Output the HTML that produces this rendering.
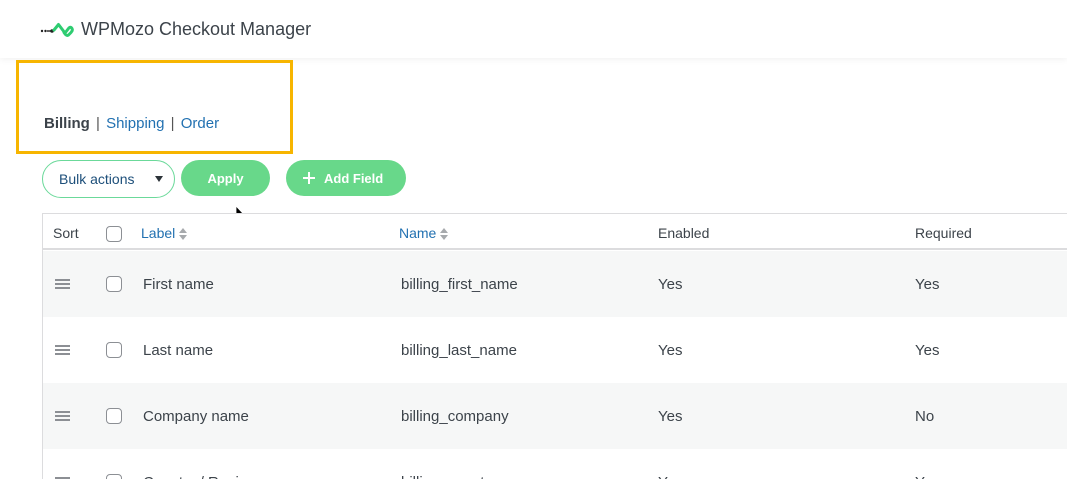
<!DOCTYPE html>
<html><head><style>
*{margin:0;padding:0;box-sizing:border-box}
html,body{width:1067px;height:479px;overflow:hidden}
body{background:#fff;font-family:"Liberation Sans",sans-serif;color:#3c434a;position:relative}
.a{position:absolute;white-space:nowrap}
.hdr{position:absolute;left:0;top:0;width:1067px;height:58px;background:#fff;box-shadow:0 2px 6px rgba(0,0,0,0.05)}
.tbl{position:absolute;left:42px;top:213px;width:1030px;height:270px;border-left:1px solid #dcdcde;border-top:1px solid #dcdcde}
.row{position:absolute;left:0;width:1030px;height:66px}
.cb{position:absolute;width:16px;height:16px;border:1.5px solid #8c8f94;border-radius:4px;background:#fff}
.t{position:absolute;font-size:15px;color:#3c434a}
.h{font-size:14px}
.blue{color:#2271b1}
.ham{position:absolute;left:12px;width:15px;height:10px;border-top:2px solid #8c8f94;border-bottom:2px solid #8c8f94}
.ham:after{content:"";position:absolute;left:0;top:2px;width:15px;height:2px;background:#8c8f94}
.sa{display:inline-block;vertical-align:middle;margin-left:3px}
</style></head><body>
<div class="hdr"></div>
<svg class="a" style="left:40px;top:20px" width="34" height="18" viewBox="0 0 34 18">
<circle cx="2" cy="11" r="1.2" fill="#222"/><circle cx="5.5" cy="11" r="1.2" fill="#222"/><line x1="7" y1="11" x2="12" y2="11" stroke="#222" stroke-width="1.4"/><circle cx="12" cy="11" r="1.8" fill="#222"/>
<path d="M14 10 L18.5 4.5 L25 13 L28.5 8.5 Q30.5 6 32 8.5 Q33 10.5 31 12.5 L28.5 15 Q27 16 25.5 14.5 L24 12.5" fill="none" stroke="#2ecc71" stroke-width="3" stroke-linejoin="round" stroke-linecap="round"/>
</svg>
<div class="a" style="left:81px;top:19px;font-size:18px;color:#3c434a">WPMozo Checkout Manager</div>
<div class="a" style="left:16px;top:60px;width:277px;height:94px;border:3px solid #f7b500"></div>
<div class="a" style="left:44px;top:115px;font-size:15px"><b style="color:#3c434a">Billing</b> <span style="color:#555;padding:0 2px">|</span> <span class="blue">Shipping</span> <span style="color:#555;padding:0 2px">|</span> <span class="blue">Order</span></div>
<div class="a" style="left:42px;top:160px;width:133px;height:38px;border:1px solid #6bd99a;border-radius:19px;background:#fff"></div>
<div class="a" style="left:59px;top:171px;font-size:14px;color:#1d4f7a">Bulk actions</div>
<div class="a" style="left:155px;top:176px;width:0;height:0;border-left:4.5px solid transparent;border-right:4.5px solid transparent;border-top:6px solid #2c3338"></div>
<div class="a" style="left:181px;top:160px;width:89px;height:36px;border-radius:18px;background:#68d88a;color:#fff;font-size:13px;font-weight:bold;text-align:center;line-height:37px">Apply</div>
<div class="a" style="left:286px;top:160px;width:120px;height:36px;border-radius:18px;background:#68d88a;color:#fff;font-size:13px;font-weight:bold;line-height:37px;padding-left:38px">Add Field</div>
<div class="a" style="left:303px;top:177px;width:12px;height:2px;background:#fff"></div>
<div class="a" style="left:308px;top:172px;width:2px;height:12px;background:#fff"></div>
<svg class="a" style="left:235px;top:205px" width="10" height="16" viewBox="0 0 10 16"><path d="M1 1 L1 12 L3.5 9.5 L5.5 14 L7 13.3 L5 9 L8.5 9 Z" fill="#000" stroke="#fff" stroke-width="0.8"/></svg>
<div class="tbl">
<div class="row" style="top:0;height:36px;background:#fff;border-bottom:2px solid #dcdcde">
<div class="t h" style="left:10px;top:11px">Sort</div>
<div class="cb" style="left:63px;top:12px"></div>
<div class="t h blue" style="left:98px;top:11px">Label<svg class="sa" width="10" height="14" viewBox="0 0 10 14"><path d="M1 6 L5 1 L9 6Z M1 8 L5 13 L9 8Z" fill="#a7aaad"/></svg></div>
<div class="t h blue" style="left:356px;top:11px">Name<svg class="sa" width="10" height="14" viewBox="0 0 10 14"><path d="M1 6 L5 1 L9 6Z M1 8 L5 13 L9 8Z" fill="#a7aaad"/></svg></div>
<div class="t h" style="left:615px;top:11px">Enabled</div>
<div class="t h" style="left:872px;top:11px">Required</div>
</div>
<div class="row" style="top:37px;background:#f6f7f7">
<div class="ham" style="top:28px"></div><div class="cb" style="left:63px;top:25px"></div>
<div class="t" style="left:100px;top:25px">First name</div><div class="t" style="left:358px;top:25px">billing_first_name</div><div class="t" style="left:615px;top:25px">Yes</div><div class="t" style="left:872px;top:25px">Yes</div></div>
<div class="row" style="top:103px;background:#fff">
<div class="ham" style="top:28px"></div><div class="cb" style="left:63px;top:25px"></div>
<div class="t" style="left:100px;top:25px">Last name</div><div class="t" style="left:358px;top:25px">billing_last_name</div><div class="t" style="left:615px;top:25px">Yes</div><div class="t" style="left:872px;top:25px">Yes</div></div>
<div class="row" style="top:169px;background:#f6f7f7">
<div class="ham" style="top:28px"></div><div class="cb" style="left:63px;top:25px"></div>
<div class="t" style="left:100px;top:25px">Company name</div><div class="t" style="left:358px;top:25px">billing_company</div><div class="t" style="left:615px;top:25px">Yes</div><div class="t" style="left:872px;top:25px">No</div></div>
<div class="row" style="top:235px;background:#fff">
<div class="ham" style="top:28px"></div><div class="cb" style="left:63px;top:25px"></div>
<div class="t" style="left:100px;top:25px">Country / Region</div><div class="t" style="left:358px;top:25px">billing_country</div><div class="t" style="left:615px;top:25px">Yes</div><div class="t" style="left:872px;top:25px">Yes</div></div>
</div>
</body></html>
